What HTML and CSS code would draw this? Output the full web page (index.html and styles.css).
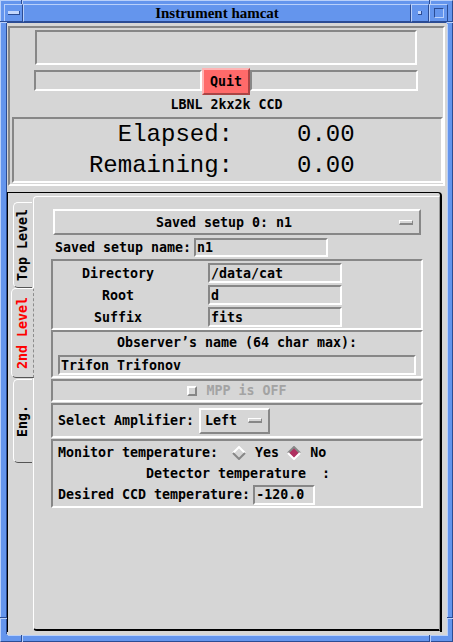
FILE: index.html
```html
<!DOCTYPE html>
<html>
<head>
<meta charset="utf-8">
<title>Instrument hamcat</title>
<link rel="stylesheet" href="styles.css">
</head>
<body>
<div class="wm">
  <span class="notch nv n-t1"></span>
  <span class="notch nv n-t2"></span>
  <span class="notch nv n-b1"></span>
  <span class="notch nv n-b2"></span>
  <span class="notch nh n-l1"></span>
  <span class="notch nh n-l2"></span>
  <span class="notch nh n-r1"></span>
  <span class="notch nh n-r2"></span>
  <div class="titlerow">
    <div class="wbtn menu"><span class="bar"></span></div>
    <div class="title">Instrument hamcat</div>
    <div class="wbtn min"><span class="dot"></span></div>
    <div class="wbtn max"><span class="sq"></span></div>
  </div>
  <div class="client">
    <div class="hdr">
      <div class="toparea">
        <div class="field bigfield"></div>
        <div class="quitrow">
          <div class="field half"></div>
          <div class="quit">Quit</div>
          <div class="field half"></div>
        </div>
        <div class="caption">LBNL 2kx2k CCD</div>
      </div>
      <div class="timer">
        <div class="tlabel">Elapsed:</div><div class="tval">0.00</div>
        <div class="tlabel">Remaining:</div><div class="tval">0.00</div>
      </div>
    </div>
    <div class="notebook">
      <div class="tabs">
        <div class="tab t1"><span class="vt">Top Level</span></div>
        <div class="tab t2"><span class="vt">2nd Level</span></div>
        <div class="tab t3"><span class="vt">Eng.</span></div>
      </div>
      <div class="page">
        <div class="optmenu"><span class="optlabel">Saved setup 0: n1</span><span class="ind"></span></div>
        <div class="namerow"><span class="lbl">Saved setup name:</span><div class="field tf w134">n1</div></div>
        <div class="frame dirframe">
          <span class="dlbl">Directory</span><div class="field tf">/data/cat</div>
          <span class="dlbl">Root</span><div class="field tf">d</div>
          <span class="dlbl">Suffix</span><div class="field tf">fits</div>
        </div>
        <div class="frame obsframe">
          <div class="obslbl">Observer’s name (64 char max):</div>
          <div class="field tf obsfield">Trifon Trifonov</div>
        </div>
        <div class="frame mppframe"><span class="chk"></span><span class="mpp">MPP is OFF</span></div>
        <div class="frame ampframe">
          <span>Select Amplifier:</span>
          <div class="optbtn"><span>Left</span><span class="ind"></span></div>
        </div>
        <div class="frame tempframe">
          <div class="trow">
            <span>Monitor temperature:</span>
            <svg class="dia d-yes" width="14" height="14" viewBox="0 0 14 14"><polygon points="7,1 13,7 7,13 1,7" fill="#d6d6d6"/><polyline points="1,7 7,1 13,7" fill="none" stroke="#ffffff" stroke-width="2"/><polyline points="1,7 7,13 13,7" fill="none" stroke="#878787" stroke-width="2"/></svg>
            <span class="rl">Yes</span>
            <svg class="dia d-no" width="14" height="14" viewBox="0 0 14 14"><polygon points="7,1 13,7 7,13 1,7" fill="#b03060"/><polyline points="1,7 7,1 13,7" fill="none" stroke="#878787" stroke-width="2"/><polyline points="1,7 7,13 13,7" fill="none" stroke="#ffffff" stroke-width="2"/></svg>
            <span class="rl">No</span>
          </div>
          <div class="trow detrow">Detector temperature  :</div>
          <div class="trow">
            <span>Desired CCD temperature:</span>
            <div class="field tf tfield">-120.0</div>
          </div>
        </div>
      </div>
    </div>
  </div>
</div>
</body>
</html>
```
FILE: styles.css
```css
* { box-sizing: border-box; }
html, body { margin: 0; padding: 0; background: #6495ed; }
body {
  width: 453px; height: 642px; overflow: hidden;
  font-family: "DejaVu Sans Mono", "Liberation Mono", monospace;
  font-weight: bold; font-size: 13.3px; color: #000;
}
.wm {
  position: relative;
  width: 453px; height: 642px;
  background: #6495ed;
  border: 1px solid; border-color: #b9d0fa #2b4c94 #2b4c94 #b9d0fa;
  padding: 3px 4px 6px 3px;
  display: flex; flex-direction: column;
}
.notch { position: absolute; }
.nv { width: 2px; border-left: 1px solid #2b4c94; border-right: 1px solid #b9d0fa; }
.nh { height: 2px; border-top: 1px solid #2b4c94; border-bottom: 1px solid #b9d0fa; }
.n-t1 { left: 20px; top: -1px; height: 4px; }
.n-t2 { left: 428px; top: -1px; height: 4px; }
.n-b1 { left: 20px; bottom: -1px; height: 7px; }
.n-b2 { left: 428px; bottom: -1px; height: 7px; }
.n-l1 { left: -1px; top: 20px; width: 7px; }
.n-l2 { left: -1px; top: 616px; width: 7px; }
.n-r1 { right: -1px; top: 20px; width: 6px; }
.n-r2 { right: -1px; top: 616px; width: 6px; }

.titlerow { display: flex; height: 18px; flex: none; }
.wbtn, .title {
  border: 1px solid; border-color: #b9d0fa #2b4c94 #2b4c94 #b9d0fa;
  background: #6495ed;
  display: flex; align-items: center; justify-content: center;
}
.menu { width: 19px; }
.min { width: 18px; }
.max { width: 19px; }
.title {
  flex: 1;
  font-family: "Liberation Serif", serif; font-weight: bold; font-size: 15px;
  line-height: 1; color: #000; padding-top: 1px;
}
.bar { width: 12px; height: 4px; background: #c4d7fb; border-right: 1px solid #2b4c94; border-bottom: 1px solid #2b4c94; }
.dot { width: 4px; height: 4px; background: #c4d7fb; border-right: 1px solid #2b4c94; border-bottom: 1px solid #2b4c94; }
.sq { width: 10px; height: 10px; border: 1px solid; border-color: #2b4c94 #b9d0fa #b9d0fa #2b4c94; }

.client {
  margin: 1px 1px 0 3px; flex: 1;
  background: #d6d6d6;
  display: flex; flex-direction: column;
  box-shadow: -1px -1px 0 #2b4c94, 1px 1px 0 #b9d0fa;
}
.field {
  background: #d6d6d6;
  border: 2px solid; border-color: #878787 #fff #fff #878787;
}
.hdr {
  margin: 3px 2px 0 1px; height: 160px; flex: none;
  border: 2px solid; border-color: #878787 #fff #fff #878787;
}
.toparea { height: 89px; padding-top: 2px; }
.bigfield { margin-left: 25px; width: 382px; height: 35px; }
.quitrow { display: flex; margin: 3px 0 0 24px; width: 384px; height: 27px; }
.half { flex: 1; height: 21px; margin-top: 2px; }
.quit {
  width: 48px; height: 27px; background: #ff6a6a;
  border: 2px solid; border-color: #ffb4b4 #a94444 #a94444 #ffb4b4;
  display: flex; align-items: center; justify-content: center;
}
.caption { margin-top: 2px; height: 16px; line-height: 16px; text-align: center; }
.timer {
  margin-left: 2px; height: 66px;
  border: 2px solid; border-color: #878787 #fff #fff #878787;
  display: grid; grid-template-columns: 219px auto; grid-auto-rows: 31px;
  column-gap: 64px; align-items: center;
  font-family: "Liberation Mono", monospace; font-weight: normal; font-size: 24px;
}
.tlabel { text-align: right; }

.notebook {
  margin: 6px 5px 3px 0; flex: 1;
  display: flex;
  border-top: 1px solid #000; border-left: 1px solid #000; border-right: 2px solid #000;
  border-top-right-radius: 4px;
}
.tabs { width: 25px; flex: none; padding-top: 9px; display: flex; flex-direction: column; }
.tab {
  margin-left: 5px; width: 19px;
  border-left: 1px solid #fff; border-top: 1px solid #fff; border-bottom: 1px solid #555;
  border-radius: 5px 0 0 5px;
  display: flex; align-items: center; justify-content: center;
  background: #d6d6d6;
}
.t1 { height: 86px; }
.t2 {
  height: 90px; margin-left: 3px; width: 23px; margin-right: -1px;
  position: relative; z-index: 1;
  border-right: 1px dashed #8c8c8c; color: #ff0000;
}
.t3 { height: 84px; margin-top: 1px; }
.vt { writing-mode: vertical-rl; transform: rotate(180deg); white-space: nowrap; line-height: 1; }

.page {
  flex: 1; margin: 3px 0 1px 0;
  border-left: 1px solid #fff; border-top: 1px solid #fff;
  border-right: 1px solid #9a9a9a; border-bottom: 2px solid #000;
  border-radius: 4px 0 0 4px;
  display: flex; flex-direction: column;
}
.optmenu {
  margin: 12px 18px 0 19px; height: 26px; flex: none;
  border: 2px solid; border-color: #fff #878787 #878787 #fff;
  display: flex; align-items: center;
}
.optlabel { flex: 1; text-align: center; }
.ind {
  width: 14px; height: 5px; flex: none;
  border-style: solid; border-width: 1px 1px 2px 1px;
  border-color: #fff #878787 #878787 #fff;
  margin: 0 6px;
}
.namerow { display: flex; align-items: center; margin-top: 3px; padding-left: 21px; height: 19px; flex: none; }
.namerow .lbl { width: 139px; }
.w134 { width: 134px; height: 19px; }
.tf { display: flex; align-items: center; padding-left: 1px; white-space: pre; overflow: hidden; }

.frame {
  margin: 0 16px 0 17px; flex: none;
  border: 2px solid; border-color: #878787 #fff #fff #878787;
}
.dirframe {
  margin-top: 2px; height: 71px; padding: 2px 0 1px;
  display: grid; grid-template-columns: 130px 134px; column-gap: 25px; row-gap: 2px;
  grid-auto-rows: 20px; align-items: center;
}
.dlbl { text-align: center; }
.dirframe .field { height: 20px; }
.obsframe { height: 48px; padding: 0 5px 1px; }
.obslbl { height: 21px; display: flex; align-items: center; justify-content: center; }
.obsfield { margin-top: 2px; height: 20px; }
.mppframe {
  margin-top: 1px; height: 23px;
  display: flex; align-items: center; justify-content: center; gap: 9px;
  color: #a3a3a3;
}
.chk { width: 10px; height: 10px; border: 2px solid; border-color: #fff #878787 #878787 #fff; }
.ampframe { margin-top: 1px; height: 35px; display: flex; align-items: center; padding-left: 5px; }
.optbtn {
  margin-left: 5px; width: 71px; height: 26px;
  border: 2px solid; border-color: #fff #878787 #878787 #fff;
  display: flex; align-items: center; padding-left: 4px;
}
.optbtn .ind { margin: 0 0 0 11px; }
.tempframe { margin-top: 1px; height: 69px; padding: 1px 0 0 5px; }
.trow { height: 21px; display: flex; align-items: center; white-space: pre; }
.dia { flex: none; }
.d-yes { margin-left: 14px; }
.d-no { margin-left: 8px; }
.rl { margin-left: 9px; }
.detrow { padding-left: 88px; }
.tfield { margin-left: 3px; width: 62px; height: 20px; }
```
